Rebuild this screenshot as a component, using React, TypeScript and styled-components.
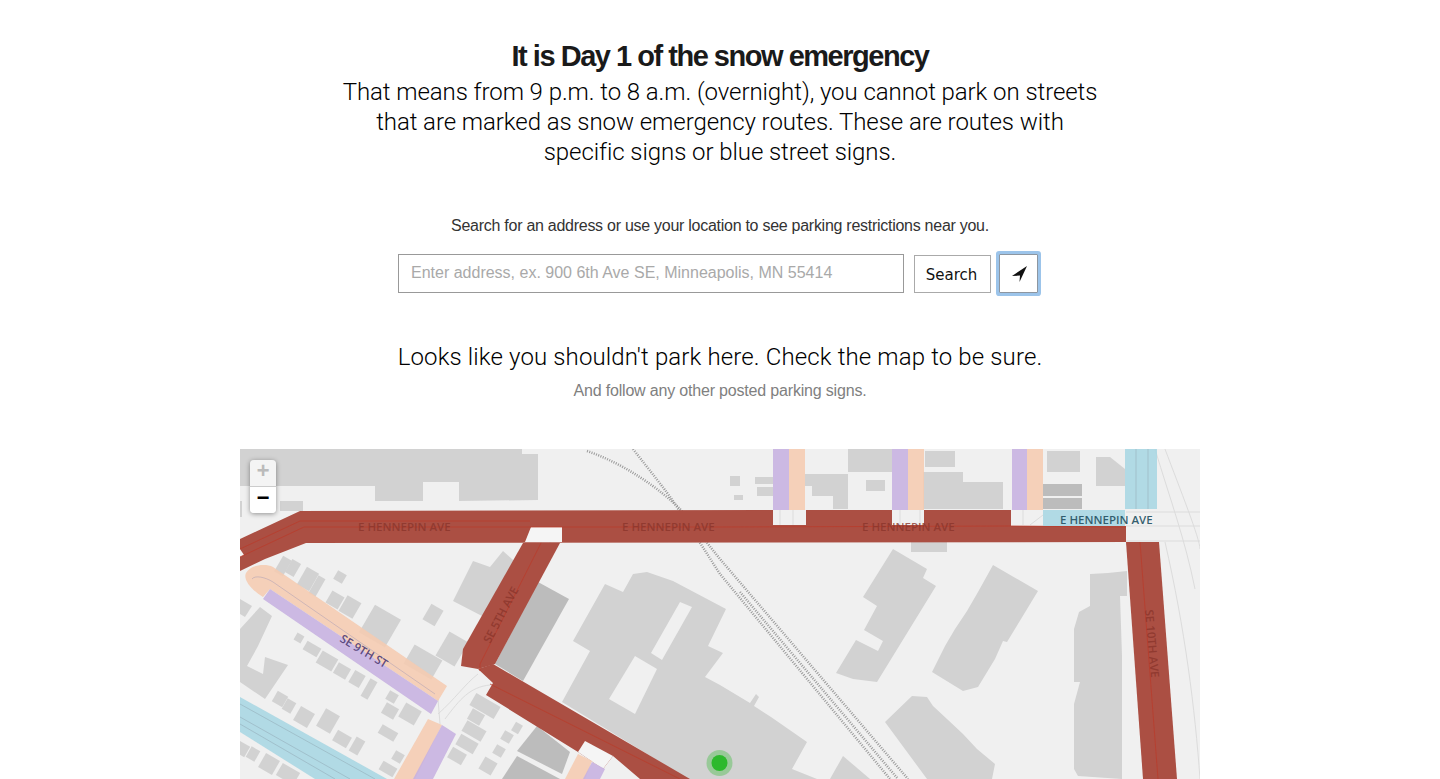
import styled, { createGlobalStyle } from 'styled-components';

const GlobalStyle = createGlobalStyle`
  html, body {
    margin: 0;
    padding: 0;
    background: #fff;
    overflow: hidden;
  }
  body {
    font-family: 'Liberation Sans', Arial, sans-serif;
    color: #111;
  }
`;

const Page = styled.div`
  display: flex;
  flex-direction: column;
  align-items: center;
  height: 779px;
  overflow: hidden;
`;
const Title = styled.h1`
  margin: 38px 0 0;
  font-size: 29px;
  line-height: 36px;
  font-weight: 700;
  letter-spacing: -1.48px;
  color: #1a1a1a;
  text-align: center;
`;
const Lead = styled.p`
  margin: 3px 0 0;
  width: 780px;
  font-family: Roboto, 'Liberation Sans', sans-serif;
  font-weight: 300;
  font-size: 24px;
  line-height: 30px;
  letter-spacing: -0.07px;
  color: #000;
  text-align: center;
`;
const Hint = styled.p`
  margin: 47px 0 0;
  font-size: 16px;
  line-height: 24px;
  letter-spacing: -0.27px;
  color: #333;
`;
const SearchRow = styled.form`
  display: flex;
  align-items: flex-start;
  margin-top: 16px;
  margin-right: 4px;
`;
const AddressInput = styled.input`
  box-sizing: border-box;
  width: 506px;
  height: 39px;
  padding: 0 12px 1px;
  border: 1px solid #999;
  border-radius: 0;
  background: #fff;
  font-family: 'Liberation Sans', Arial, sans-serif;
  font-size: 16px;
  outline: none;
  &::placeholder {
    color: #a9a9a9;
    opacity: 1;
  }
`;
const SearchButton = styled.button`
  box-sizing: border-box;
  width: 77px;
  height: 38px;
  margin: 1px 0 0 10px;
  padding: 1px 2px 0 0;
  border: 1px solid #aaa;
  border-radius: 0;
  background: #fff;
  color: #111;
  font-family: 'DejaVu Sans', sans-serif;
  font-size: 15px;
`;
const LocateButton = styled.button`
  box-sizing: border-box;
  display: flex;
  align-items: center;
  justify-content: center;
  width: 39px;
  height: 39px;
  margin-left: 8px;
  padding: 0;
  border: 1px solid #8d96a0;
  border-radius: 1px;
  background: #fff;
  box-shadow: 0 0 0 3px #9cc4ea;
`;
const Result = styled.h2`
  margin: 48px 0 0;
  font-family: Roboto, 'Liberation Sans', sans-serif;
  font-weight: 300;
  font-size: 24px;
  line-height: 32px;
  letter-spacing: 0.13px;
  color: #000;
`;
const Note = styled.p`
  margin: 6px 0 0;
  font-size: 16px;
  line-height: 24px;
  letter-spacing: -0.18px;
  color: #808080;
`;
const MapFrame = styled.div`
  position: relative;
  flex: none;
  width: 960px;
  height: 330px;
  margin-top: 46px;
  overflow: hidden;
  background: #f0f0f0;
  svg {
    display: block;
  }
`;
const ZoomControl = styled.div`
  position: absolute;
  top: 11px;
  left: 10px;
  width: 26px;
  border-radius: 4px;
  overflow: hidden;
  box-shadow: 0 1px 5px rgba(0, 0, 0, 0.4);
`;
const ZoomButton = styled.div<{ $disabled?: boolean }>`
  height: 26px;
  background: ${(p) => (p.$disabled ? '#f4f4f4' : '#fff')};
  border-bottom: ${(p) => (p.$disabled ? '1px solid #ccc' : 'none')};
  color: ${(p) => (p.$disabled ? '#bbb' : '#000')};
  font-family: 'Lucida Console', 'Liberation Mono', monospace;
  font-size: 22px;
  font-weight: 700;
  line-height: 26px;
  text-align: center;
`;
const labelColors = { red: '#8a352b', blue: '#2a5566', purple: '#54427a' };
const StreetLabel = styled.text<{ $tone: keyof typeof labelColors }>`
  font-family: 'Open Sans', sans-serif;
  font-size: 11.5px;
  font-weight: 600;
  fill: ${(p) => labelColors[p.$tone]};
  fill-opacity: ${(p) => (p.$tone === 'red' ? 0.8 : 0.95)};
`;

const GRAY = '#d2d2d2';
const DARK = '#bcbcbc';
const RED = '#ab4f43';
const REDLINE = '#b93c2c';
const PEACH = '#f5cbb0';
const PURPLE = '#c6b0e0';
const BLUE = '#a7d6e2';
const GROUND = '#f0f0f0';

// footprints traced from the map, in px from the map's top left
const buildings = [
  '0,0 282,0 282,5 298,5 298,51 219,52 219,33 183,33 183,52 135,52 135,37 0,37',
  '0,52 2,52 2,68 0,68',
  '40,52 63,52 63,62 40,62',
  '20,158 32,167 18,197 7,217 23,225 25,208 48,216 25,250 0,233 0,180',
  '0,150 12,157 5,168 0,165',
  '233,112 250,118 263,102 298,133 242,167 213,152',
  '365,135 383,143 393,125 407,123 433,132 486,160 468,197 483,204 465,228 480,236 510,254 516,245 519,248 514,257 531,268 567,293 552,320 577,330 448,330 322,253 350,202 333,192',
  '653,100 687,120 683,129 696,137 637,233 613,230 596,224 616,191 638,202 643,192 624,181 637,157 623,148',
  '753,116 798,142 767,193 763,192 755,210 738,238 723,242 692,223 705,197 715,180 727,162 738,143',
  '850,125 868,124 887,122 887,147 880,147 882,207 882,260 882,330 838,327 834,320 834,255 840,233 834,233 834,180 839,163 850,157',
  '672,247 687,248 693,257 707,270 723,285 737,300 755,315 752,330 687,330 645,273',
  '603,307 630,330 590,330',
  '608,0 652,0 652,23 608,23',
  '685,2 715,2 715,18 685,18',
  '683,23 723,23 723,33 763,33 763,60 683,60',
  '565,25 608,25 608,60 593,60 593,47 572,47 572,37 565,37',
  '807,2 840,2 840,23 807,23',
  '856,8 870,8 885,20 885,37 856,37',
  '671,93 707,93 707,103 671,103',
  '490,27 500,27 500,37 490,37',
  '515,28 533,28 533,35 515,35',
  '517,38 533,38 533,47 517,47',
  '494,46 503,46 503,51 494,51',
  '626,31 645,31 645,42 626,42',
];

// courtyards in the big building
const courtyards = [
  '440,153 452,158 422,211 411,204',
  '395,207 417,220 395,265 369,250',
];

const darkBuildings = [
  '298,133 329,150 283,232 255,215',
  '297,277 330,303 322,325 277,302',
  '277,307 320,330 262,330',
  '803,35 842,35 842,47 803,47',
  '803,49 842,49 842,60 803,60',
];

// small houses, turned with the street grid: cx, cy, w, h
const houses = [
  [43, 117, 10, 18], [53, 119, 10, 15], [68, 130, 14, 20], [77, 137, 8, 20], [100, 128, 10, 10],
  [95, 151, 14, 14], [110, 158, 16, 18], [140, 177, 30, 32], [193, 166, 14, 18], [212, 200, 22, 28],
  [183, 213, 32, 22], [59, 189, 8, 8], [72, 200, 16, 10], [87, 212, 18, 14], [102, 222, 14, 12],
  [117, 230, 12, 14], [129, 240, 8, 20], [40, 250, 12, 12], [49, 257, 10, 12], [64, 268, 16, 16],
  [88, 272, 16, 20], [102, 290, 16, 12], [117, 297, 10, 16], [152, 248, 10, 10], [150, 262, 14, 12],
  [170, 265, 18, 16], [148, 284, 18, 10], [158, 308, 10, 10], [148, 320, 16, 10], [245, 257, 28, 14],
  [236, 268, 14, 12], [234, 282, 22, 12], [227, 295, 20, 12], [217, 307, 16, 12], [267, 288, 10, 10],
  [259, 302, 10, 10], [277, 279, 8, 10], [248, 317, 14, 14], [13, 305, 10, 12], [2, 300, 12, 12],
  [29, 315, 16, 16], [48, 325, 20, 14],
];

const railways = [
  'M347 2 C385 15 420 40 440 60 L480 110 L668 330',
  'M393 0 C410 22 425 40 435 55 L480 125 L650 330',
  'M500 143 L658 330',
];

export default function App() {
  return (
    <Page>
      <GlobalStyle />
      <Title>It is Day 1 of the snow emergency</Title>
      <Lead>
        That means from 9 p.m. to 8 a.m. (overnight), you cannot park on streets
        <br />
        that are marked as snow emergency routes. These are routes with
        <br />
        specific signs or blue street signs.
      </Lead>
      <Hint>Search for an address or use your location to see parking restrictions near you.</Hint>
      <SearchRow>
        <AddressInput placeholder="Enter address, ex. 900 6th Ave SE, Minneapolis, MN 55414" />
        <SearchButton type="button">Search</SearchButton>
        <LocateButton type="button" aria-label="Use my location">
          <svg width="16" height="16" viewBox="0 0 16 16">
            <path d="M16 0 L1 10 L9 9.5 L8.5 16 Z" fill="#111" />
          </svg>
        </LocateButton>
      </SearchRow>
      <Result>Looks like you shouldn't park here. Check the map to be sure.</Result>
      <Note>And follow any other posted parking signs.</Note>
      <MapFrame>
        <svg width="960" height="330" viewBox="0 0 960 330">
          {buildings.map((points) => (
            <polygon key={points} points={points} fill={GRAY} />
          ))}
          {courtyards.map((points) => (
            <polygon key={points} points={points} fill={GROUND} />
          ))}
          {houses.map(([cx, cy, w, h]) => (
            <rect
              key={`${cx}-${cy}`}
              x={cx - w / 2}
              y={cy - h / 2}
              width={w}
              height={h}
              fill={GRAY}
              transform={`rotate(30 ${cx} ${cy})`}
            />
          ))}
          {darkBuildings.map((points) => (
            <polygon key={points} points={points} fill={DARK} />
          ))}
          {railways.map((d) => (
            <path key={d} d={d} fill="none" stroke="#999" strokeWidth="2.5" strokeDasharray="1 1.4" />
          ))}

          {/* side streets */}
          <g fill="none" stroke="#dcdcdc" strokeWidth="1">
            <path d="M198 265 C215 250 225 235 238 225 M205 270 C220 250 230 238 250 236" />
            <path d="M198 250 L200 275 M301 80 L301 94 M310 85 L310 94" />
            <path d="M915 0 C930 50 945 90 955 140 M925 0 C940 40 960 90 960 100 M925 93 C945 180 955 260 960 330" />
            <path d="M540 61 L540 76 M553 61 L553 76 M660 61 L660 76 M680 61 L680 76 M783 61 L783 76 M803 66 L790 76" />
            <path d="M886 63 L960 63 M886 77 L960 77 M886 92 L960 92" />
          </g>

          {/* no parking today */}
          <path
            d="M0 90 L60 62 L533 61 L533 76 L566 76 L566 61 L652 61 L652 76 L684 76 L684 61 L771 61 L771 77 L886 77 L886 93 L66 94 L25 110 L0 122 Z"
            fill={RED}
          />
          <polygon points="283,94 320,94 255,215 238,220 221,217 223,200" fill={RED} />
          <polygon points="238,220 253,215 450,330 400,330 373,307 363,320 338,303 246,246 253,234" fill={RED} />
          <polygon points="886,93 919,93 937,330 903,330" fill={RED} />
          <polygon points="285,93 322,93 322,78 291,78" fill="#f5f5f5" />
          <polygon points="0,100 4,106 0,108" fill="#f5f5f5" />
          <polygon points="345,292 373,307 363,320 338,303" fill="#f5f5f5" />
          <g fill="none" stroke={REDLINE} strokeWidth="0.8">
            <path d="M0 108 L64 78 L480 78 L771 77 L886 78" />
            <path d="M0 100 L60 72 L290 72" />
            <path d="M301 94 L240 215 L240 222" />
            <path d="M250 235 L440 330" />
            <path d="M900 93 L918 330" />
          </g>

          {/* alternate side */}
          <g fillOpacity="0.88">
            <path d="M33 118 L207 237 L198 252 L30 140 L23 148 C10 140 3 130 6 124 C10 116 25 114 33 118 Z" fill={PEACH} />
            <polygon points="30,140 198,252 191,265 23,150" fill={PURPLE} />
            <polygon points="188,270 202,276 175,330 154,330" fill={PEACH} />
            <polygon points="202,276 216,285 193,330 173,330" fill={PURPLE} />
            <polygon points="338,305 352,312 345,330 325,330" fill={PEACH} />
            <polygon points="352,313 365,320 360,330 343,330" fill={PURPLE} />
            <polygon points="533,0 549,0 549,61 533,61" fill={PURPLE} />
            <polygon points="549,0 565,0 565,61 549,61" fill={PEACH} />
            <polygon points="652,0 668,0 668,61 652,61" fill={PURPLE} />
            <polygon points="668,0 684,0 684,61 668,61" fill={PEACH} />
            <polygon points="772,0 787,0 787,61 772,61" fill={PURPLE} />
            <polygon points="787,0 803,0 803,61 787,61" fill={PEACH} />
            <polygon points="885,0 917,0 917,60 885,60" fill={BLUE} />
            <polygon points="803,61 885,61 885,77 803,77" fill={BLUE} />
            <polygon points="0,248 147,330 75,330 0,283" fill={BLUE} />
          </g>
          <g fill="none" stroke="#8fa6b2" strokeWidth="0.7" strokeOpacity="0.7">
            <path d="M0 255 L135 330 M0 268 L110 330 M0 275 L95 330" />
            <path d="M896 0 L896 60 M908 0 L908 60" />
          </g>
          <path d="M12 130 C15 126 25 128 33 133 L195 245" fill="none" stroke="#a89bb4" strokeWidth="0.7" strokeOpacity="0.7" />

          <StreetLabel $tone="red" x="118" y="82">E HENNEPIN AVE</StreetLabel>
          <StreetLabel $tone="red" x="382" y="82">E HENNEPIN AVE</StreetLabel>
          <StreetLabel $tone="red" x="622" y="82">E HENNEPIN AVE</StreetLabel>
          <StreetLabel $tone="blue" x="820" y="75">E HENNEPIN AVE</StreetLabel>
          <StreetLabel $tone="red" x="0" y="0" transform="translate(250 195) rotate(-62)">SE 5TH AVE</StreetLabel>
          <StreetLabel $tone="red" x="0" y="0" transform="translate(905 161) rotate(85)">SE 10TH AVE</StreetLabel>
          <StreetLabel $tone="purple" x="0" y="0" transform="translate(99 192) rotate(31)">SE 9TH ST</StreetLabel>

          <circle cx="479.5" cy="314" r="13" fill="#2db92d" fillOpacity="0.35" />
          <circle cx="479.5" cy="314" r="8" fill="#2db92d" />
        </svg>
        <ZoomControl>
          <ZoomButton $disabled>+</ZoomButton>
          <ZoomButton>−</ZoomButton>
        </ZoomControl>
      </MapFrame>
    </Page>
  );
}
